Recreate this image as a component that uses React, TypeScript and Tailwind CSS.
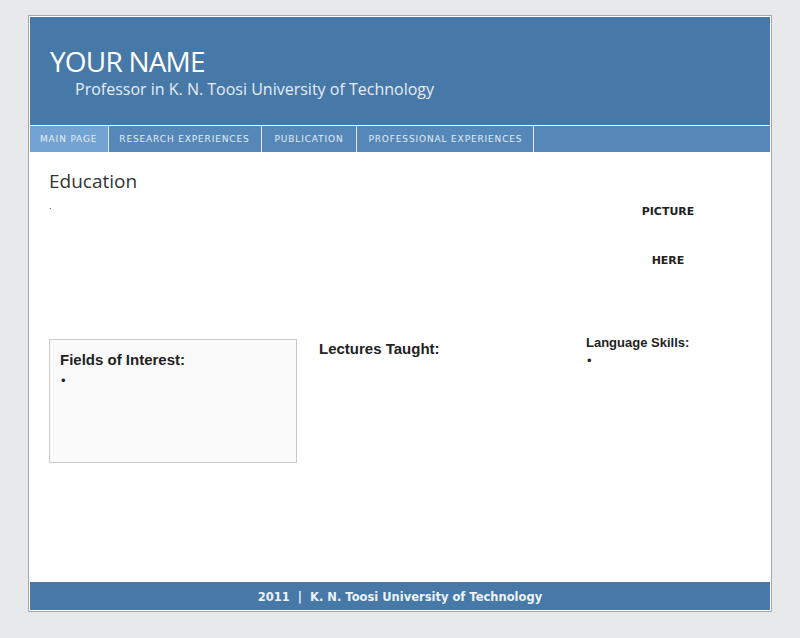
import React from "react";

const navItems = [
  { label: "MAIN PAGE", cls: "bg-[#73a3d3] pl-[10px] pr-[11px]" },
  { label: "RESEARCH EXPERIENCES", cls: "pl-[10px] pr-[11px]" },
  { label: "PUBLICATION", cls: "px-[13px]" },
  { label: "PROFESSIONAL EXPERIENCES", cls: "px-[11px]" },
];

const lib = { fontFamily: '"Liberation Sans", Arial, sans-serif' };

export default function App() {
  return (
    <div className="min-h-[638px] w-full bg-[#e8e9eb] pt-[15px] pb-[26px]" style={{ fontFamily: '"DejaVu Sans", Verdana, sans-serif' }}>
      <div className="mx-auto w-[744px] border border-[#a7a7a7] bg-white p-px">
        <header className="h-[108px] bg-[#4678a8] pl-[20px] pt-[27px]" style={{ fontFamily: '"Open Sans", "DejaVu Sans", sans-serif' }}>
          <h1 className="text-[28px] leading-[34px] text-white tracking-[-0.8px]">YOUR NAME</h1>
          <p className="pl-[25px] text-[16px] leading-[22px] text-[#e6edf5]">Professor in K. N. Toosi University of Technology</p>
        </header>
        <nav className="mt-px flex h-[26px] bg-[#5588b8]">
          {navItems.map((item) => (
            <div
              key={item.label}
              className={
                "flex items-center border-r border-[#e2ebf4] pt-[2px] text-[9px] tracking-[0.85px] text-[#e4ecf5] " + item.cls
              }
            >
              {item.label}
            </div>
          ))}
        </nav>
        <main className="h-[430px] bg-white px-[19px] pt-[17px]">
          <div className="flex">
            <div className="flex-1">
              <h2 className="text-[19px] leading-[24px] text-[#333]" style={{ fontFamily: '"Open Sans", "DejaVu Sans", sans-serif' }}>Education</h2>
              <div className="mt-[10px] text-[8px] leading-[8px] text-[#333]">.</div>
            </div>
            <div className="w-[166px] pt-[36px] text-center text-[11px] font-bold text-[#222]">
              <p className="leading-[14px]">PICTURE</p>
              <p className="mt-[35px] leading-[14px]">HERE</p>
            </div>
          </div>
          <div className="mt-[71px] flex items-start" style={lib}>
            <div className="h-[124px] w-[248px] border border-[#c9c9c9] bg-[#fafafa] px-[10px] pt-[10px]">
              <h3 className="text-[15px] font-bold leading-[20px] text-[#222]">Fields of Interest:</h3>
              <p className="mt-[3px] pl-[1px] text-[13px] leading-[16px] text-[#222]">•</p>
            </div>
            <div className="ml-[22px] w-[267px]">
              <h3 className="text-[15px] font-bold leading-[20px] text-[#222]">Lectures Taught:</h3>
            </div>
            <div className="-mt-[5px]">
              <h3 className="text-[13px] font-bold leading-[17px] text-[#222]">Language Skills:</h3>
              <p className="mt-[2px] pl-[1px] text-[13px] leading-[16px] text-[#222]">•</p>
            </div>
          </div>
        </main>
        <footer className="flex h-[28px] items-center justify-center bg-[#4678a8] pt-[3px] text-[11.5px] font-bold text-[#eef3f8]">
          2011&nbsp; | &nbsp;K. N. Toosi University of Technology
        </footer>
      </div>
    </div>
  );
}
